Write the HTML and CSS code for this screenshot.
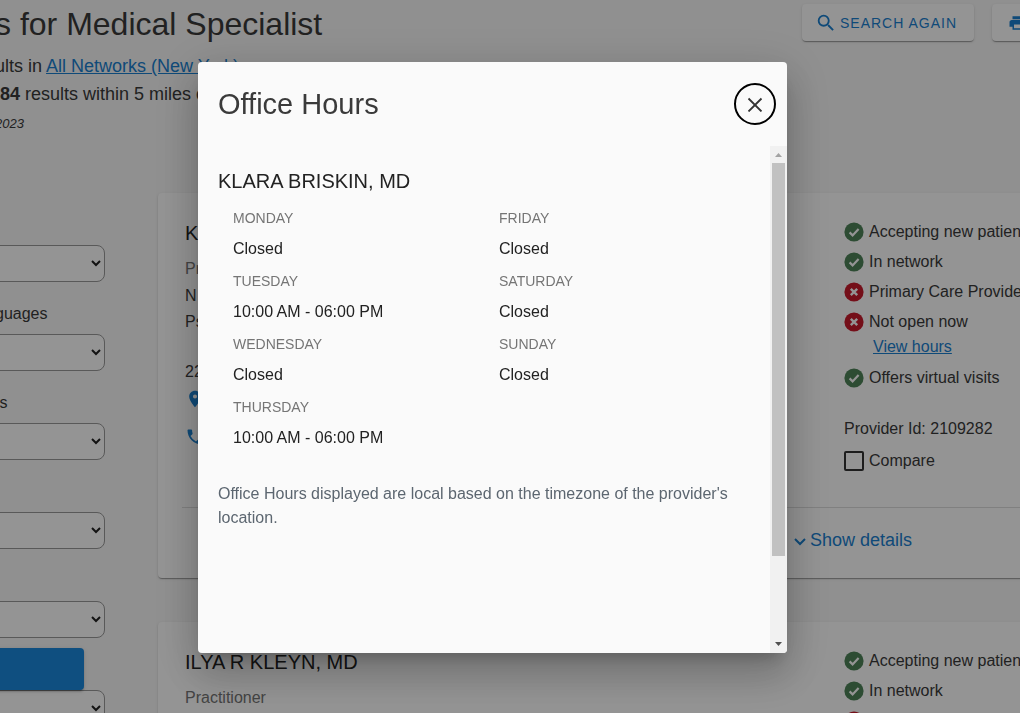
FILE: index.html
```html
<!DOCTYPE html>
<html lang="en">
<head>
    <meta charset="UTF-8">
    <meta name="viewport" content="width=device-width, initial-scale=1.0">
    <title>Find a Provider - Office Hours</title>
    <link rel="stylesheet" href="styles.css">
</head>
<body>
    <!-- Shared icons -->
    <svg class="sprite" aria-hidden="true">
        <symbol id="icon-check" viewBox="0 0 20 20">
            <circle cx="10" cy="10" r="9.6" fill="#4e8359"/>
            <path d="M5.6 10.4l3 3 6-6.4" fill="none" stroke="#fff" stroke-width="2.2"/>
        </symbol>
        <symbol id="icon-cross" viewBox="0 0 20 20">
            <circle cx="10" cy="10" r="9.6" fill="#c91a2c"/>
            <path d="M6.8 6.8l6.4 6.4M13.2 6.8l-6.4 6.4" fill="none" stroke="#fff" stroke-width="2.4"/>
        </symbol>
    </svg>

    <div class="page">
        <header class="results-header">
            <div class="results-info">
                <h1>s for Medical Specialist</h1>
                <p>ults in <a href="#">All Networks (New York)</a></p>
                <p><strong>&nbsp;84</strong> results within 5 miles of</p>
                <p class="updated">2023</p>
            </div>
            <div class="actions">
                <button class="action-btn" type="button">
                    <svg width="22" height="22" viewBox="0 0 24 24" fill="currentColor"><path d="M15.5 14h-.79l-.28-.27A6.471 6.471 0 0 0 16 9.5 6.5 6.5 0 1 0 9.5 16c1.61 0 3.09-.59 4.23-1.57l.27.28v.79l5 4.99L20.49 19l-4.99-5zm-6 0C7.01 14 5 11.99 5 9.5S7.01 5 9.5 5 14 7.01 14 9.5 11.99 14 9.5 14z"/></svg>
                    SEARCH AGAIN
                </button>
                <button class="action-btn print-btn" type="button" aria-label="Print">
                    <svg width="18" height="18" viewBox="0 0 24 24" fill="currentColor"><path d="M19 8H5c-1.66 0-3 1.34-3 3v6h4v4h12v-4h4v-6c0-1.66-1.34-3-3-3zm-3 11H8v-5h8v5zm3-7c-.55 0-1-.45-1-1s.45-1 1-1 1 .45 1 1-.45 1-1 1zm-1-9H6v4h12V3z"/></svg>
                </button>
            </div>
        </header>

        <div class="results">
            <!-- Filters -->
            <form class="filters">
                <div class="filter"><select aria-label="Specialty"></select></div>
                <div class="filter">
                    <label for="languages">guages</label>
                    <select id="languages"></select>
                </div>
                <div class="filter">
                    <label for="providers">&nbsp;s</label>
                    <select id="providers"></select>
                </div>
                <div class="filter"><select aria-label="Gender"></select></div>
                <div class="filter"><select aria-label="Distance"></select></div>
                <div class="filter"><select aria-label="Hospital"></select></div>
                <button class="apply-btn" type="button" aria-label="Apply filters"></button>
            </form>

            <!-- Provider Cards -->
            <main class="cards">
                <article class="card">
                    <div class="card-main">
                        <div class="provider">
                            <h2>KLARA BRISKIN, MD</h2>
                            <p class="role">Practitioner</p>
                            <p>N</p>
                            <p>Ps</p>
                            <p class="address">22</p>
                            <svg class="contact-icon" viewBox="0 0 24 24"><path d="M12 2C8.13 2 5 5.13 5 9c0 5.25 7 13 7 13s7-7.75 7-13c0-3.87-3.13-7-7-7zm0 9.500a2.500 2.500 0 1 1 0-5 2.500 2.500 0 0 1 0 5z"/></svg>
                            <svg class="contact-icon" viewBox="0 0 24 24"><path d="M20 15.500c-1.250 0-2.450-.2-3.570-.57a1 1 0 0 0-1.020.24l-2.200 2.200a15.050 15.050 0 0 1-6.590-6.590l2.200-2.210a.96.96 0 0 0 .25-1A11.360 11.360 0 0 1 8.500 4c0-.55-.45-1-1-1H4c-.55 0-1 .45-1 1 0 9.390 7.610 17 17 17 .55 0 1-.45 1-1v-3.500c0-.55-.45-1-1-1z"/></svg>
                        </div>
                        <div class="status">
                            <div class="status-row"><svg><use href="#icon-check"/></svg>Accepting new patients</div>
                            <div class="status-row"><svg><use href="#icon-check"/></svg>In network</div>
                            <div class="status-row"><svg><use href="#icon-cross"/></svg>Primary Care Provider</div>
                            <div class="status-row"><svg><use href="#icon-cross"/></svg>Not open now</div>
                            <a class="view-hours" href="#">View hours</a>
                            <div class="status-row"><svg><use href="#icon-check"/></svg>Offers virtual visits</div>
                            <p class="provider-id">Provider Id: 2109282</p>
                            <label class="compare"><input type="checkbox">Compare</label>
                        </div>
                    </div>
                    <div class="card-footer">
                        <a href="#">
                            <svg width="12" height="12" viewBox="0 0 12 12"><path d="M1 5l5 5 5-5" fill="none" stroke="currentColor" stroke-width="2"/></svg>
                            Show details
                        </a>
                    </div>
                </article>

                <article class="card">
                    <div class="card-main">
                        <div class="provider">
                            <h2>ILYA R KLEYN, MD</h2>
                            <p class="role">Practitioner</p>
                        </div>
                        <div class="status">
                            <div class="status-row"><svg><use href="#icon-check"/></svg>Accepting new patients</div>
                            <div class="status-row"><svg><use href="#icon-check"/></svg>In network</div>
                            <div class="status-row"><svg><use href="#icon-cross"/></svg></div>
                        </div>
                    </div>
                </article>
            </main>
        </div>
    </div>

    <!-- Office Hours Dialog -->
    <div class="overlay">
        <section class="dialog" role="dialog" aria-labelledby="dialog-title">
            <header class="dialog-header">
                <h2 id="dialog-title">Office Hours</h2>
                <button class="close-btn" type="button" aria-label="Close">
                    <svg width="16" height="16" viewBox="0 0 16 16"><path d="M1.500 2.500l13 13M14.500 2.500l-13 13" fill="none" stroke="#333" stroke-width="1.800"/></svg>
                </button>
            </header>
            <div class="dialog-body">
                <div class="dialog-content">
                    <h3>KLARA BRISKIN, MD</h3>
                    <div class="hours">
                        <dl>
                            <dt>MONDAY</dt>
                            <dd>Closed</dd>
                            <dt>TUESDAY</dt>
                            <dd>10:00 AM - 06:00 PM</dd>
                            <dt>WEDNESDAY</dt>
                            <dd>Closed</dd>
                            <dt>THURSDAY</dt>
                            <dd>10:00 AM - 06:00 PM</dd>
                        </dl>
                        <dl>
                            <dt>FRIDAY</dt>
                            <dd>Closed</dd>
                            <dt>SATURDAY</dt>
                            <dd>Closed</dd>
                            <dt>SUNDAY</dt>
                            <dd>Closed</dd>
                        </dl>
                    </div>
                    <p class="note">Office Hours displayed are local based on the timezone of the provider's location.</p>
                </div>
                <div class="scrollbar" aria-hidden="true">
                    <svg width="17" height="17" viewBox="0 0 17 17"><path d="M5 11l3.500-4 3.500 4z" fill="#a3a3a3"/></svg>
                    <div class="track"><div class="thumb"></div></div>
                    <svg width="17" height="17" viewBox="0 0 17 17"><path d="M5 6l3.500 4L12 6z" fill="#505050"/></svg>
                </div>
            </div>
        </section>
    </div>
</body>
</html>
```

FILE: styles.css
```css
:root {
    --primary: #1a80d0;
    --text: #3a3a3a;
    --muted: #757575;
    --bg: #f8f8f8;
    --card-shadow: 0 2px 1px -1px rgba(0, 0, 0, 0.2), 0 1px 1px rgba(0, 0, 0, 0.14), 0 1px 3px rgba(0, 0, 0, 0.12);
}

* {
    margin: 0;
    padding: 0;
    box-sizing: border-box;
}

body {
    background-color: var(--bg);
    color: var(--text);
    font-family: "Liberation Sans", Arial, sans-serif;
    font-size: 16px;
    height: 100vh;
    overflow: hidden;
}

a {
    color: var(--primary);
}

button,
select {
    font: inherit;
}

.sprite {
    display: none;
}

/* Page runs past both sides of the window */
.page {
    margin: 0 -60px 0 -5px;
    padding-top: 4px;
}

/* Results header */
.results-header {
    display: flex;
    justify-content: space-between;
    align-items: flex-start;
    margin-bottom: 57px;
}

.results-info {
    font-size: 18px;
    line-height: 28px;
}

h1 {
    font-size: 32px;
    font-weight: normal;
    line-height: 40px;
    margin-bottom: 8px;
}

.results-info .updated {
    font-size: 13px;
    font-style: italic;
    line-height: 24px;
    margin-top: 4px;
}

.actions {
    display: flex;
    gap: 18px;
}

.action-btn {
    display: flex;
    align-items: center;
    gap: 3px;
    height: 37px;
    padding: 0 17px 0 13px;
    border: none;
    border-radius: 4px;
    background: white;
    color: var(--primary);
    font-size: 14px;
    letter-spacing: 1px;
    box-shadow: var(--card-shadow);
}

.print-btn {
    width: 88px;
    padding-left: 16px;
}

.results {
    display: flex;
    align-items: flex-start;
    gap: 53px;
}

/* Filters */
.filters {
    width: 110px;
    flex-shrink: 0;
}

.filter {
    display: flex;
    flex-direction: column;
    justify-content: flex-end;
    min-height: 89px;
}

.filter label {
    line-height: 24px;
    margin-bottom: 8px;
}

.filter select {
    width: 120px;
    height: 37px;
    margin-left: -10px;
    padding-right: 1px;
    border: 1px solid #999;
    border-radius: 8px;
    background-color: white;
    color: #222;
}

.apply-btn {
    position: fixed;
    left: -10px;
    bottom: 23px;
    width: 94px;
    height: 42px;
    border: none;
    border-radius: 4px;
    background: #1a88dc;
    box-shadow: 0 3px 1px -2px rgba(0, 0, 0, 0.2), 0 2px 2px rgba(0, 0, 0, 0.14), 0 1px 5px rgba(0, 0, 0, 0.12);
}

/* Provider cards */
.cards {
    flex: 1;
    display: flex;
    flex-direction: column;
    gap: 44px;
}

.card {
    background: white;
    border-radius: 4px;
    padding: 0 24px;
    box-shadow: var(--card-shadow);
}

.card-main {
    display: flex;
    justify-content: space-between;
    padding: 24px 0 36px 3px;
}

.provider {
    line-height: 26px;
    padding-top: 3px;
}

.provider h2 {
    color: #222;
    font-size: 20px;
    font-weight: normal;
    margin-bottom: 10px;
}

.provider .role {
    color: var(--muted);
    margin-bottom: 1px;
}

.provider .address {
    margin: 24px 0 4px;
}

.contact-icon {
    display: block;
    width: 20px;
    height: 20px;
    margin-bottom: 18px;
    fill: var(--primary);
}

.status {
    width: 212px;
}

.status-row {
    display: flex;
    align-items: center;
    gap: 5px;
    height: 30px;
    white-space: nowrap;
}

.status-row svg {
    width: 20px;
    height: 20px;
    flex-shrink: 0;
}

.view-hours {
    display: block;
    line-height: 20px;
    margin: 0 0 6px 29px;
}

.provider-id {
    line-height: 20px;
    margin: 26px 0 12px;
}

.compare {
    display: flex;
    align-items: center;
    gap: 5px;
    line-height: 20px;
}

.compare input {
    appearance: none;
    width: 20px;
    height: 20px;
    border: 2px solid #333;
    border-radius: 2px;
}

.card-footer {
    display: flex;
    justify-content: flex-end;
    align-items: center;
    height: 71px;
    padding: 0 144px 6px 0;
    border-top: 1px solid #ddd;
}

.card-footer a {
    display: flex;
    align-items: center;
    gap: 4px;
    font-size: 18px;
    text-decoration: none;
}

/* Dialog */
.overlay {
    position: fixed;
    inset: 0;
    display: flex;
    justify-content: center;
    align-items: center;
    padding: 2px 35px 0 0;
    background: rgba(0, 0, 0, 0.42);
}

.dialog {
    width: 589px;
    max-width: 100%;
    background: #fafafa;
    border-radius: 4px;
    overflow: hidden;
    box-shadow: 0 11px 15px -7px rgba(0, 0, 0, 0.2), 0 24px 38px 3px rgba(0, 0, 0, 0.14), 0 9px 46px 8px rgba(0, 0, 0, 0.12);
}

.dialog-header {
    display: flex;
    justify-content: space-between;
    align-items: center;
    height: 84px;
    padding: 0 11px 0 20px;
}

.dialog-header h2 {
    font-size: 29px;
    font-weight: normal;
}

.close-btn {
    display: flex;
    align-items: center;
    justify-content: center;
    width: 42px;
    height: 42px;
    border: 2px solid black;
    border-radius: 50%;
    background: none;
}

.dialog-body {
    display: flex;
}

.dialog-content {
    flex: 1;
    padding: 20px 20px 123px;
}

.dialog-content h3 {
    color: #222;
    font-size: 20px;
    font-weight: normal;
    line-height: 30px;
    margin-bottom: 7px;
}

.hours {
    display: grid;
    grid-template-columns: 1fr 1fr;
    margin: 0 -15px 27px 0;
    padding-left: 15px;
}

.hours dt {
    color: var(--muted);
    font-size: 14px;
    line-height: 30px;
}

.hours dd {
    color: #222;
    line-height: 32px;
    margin-bottom: 1px;
}

.note {
    color: #5c6670;
    line-height: 24px;
}

.scrollbar {
    display: flex;
    flex-direction: column;
    width: 17px;
    background: #f1f1f1;
}

.track {
    flex: 1;
    padding: 0 2px;
}

.thumb {
    height: 83%;
    background: #c1c1c1;
}
```
